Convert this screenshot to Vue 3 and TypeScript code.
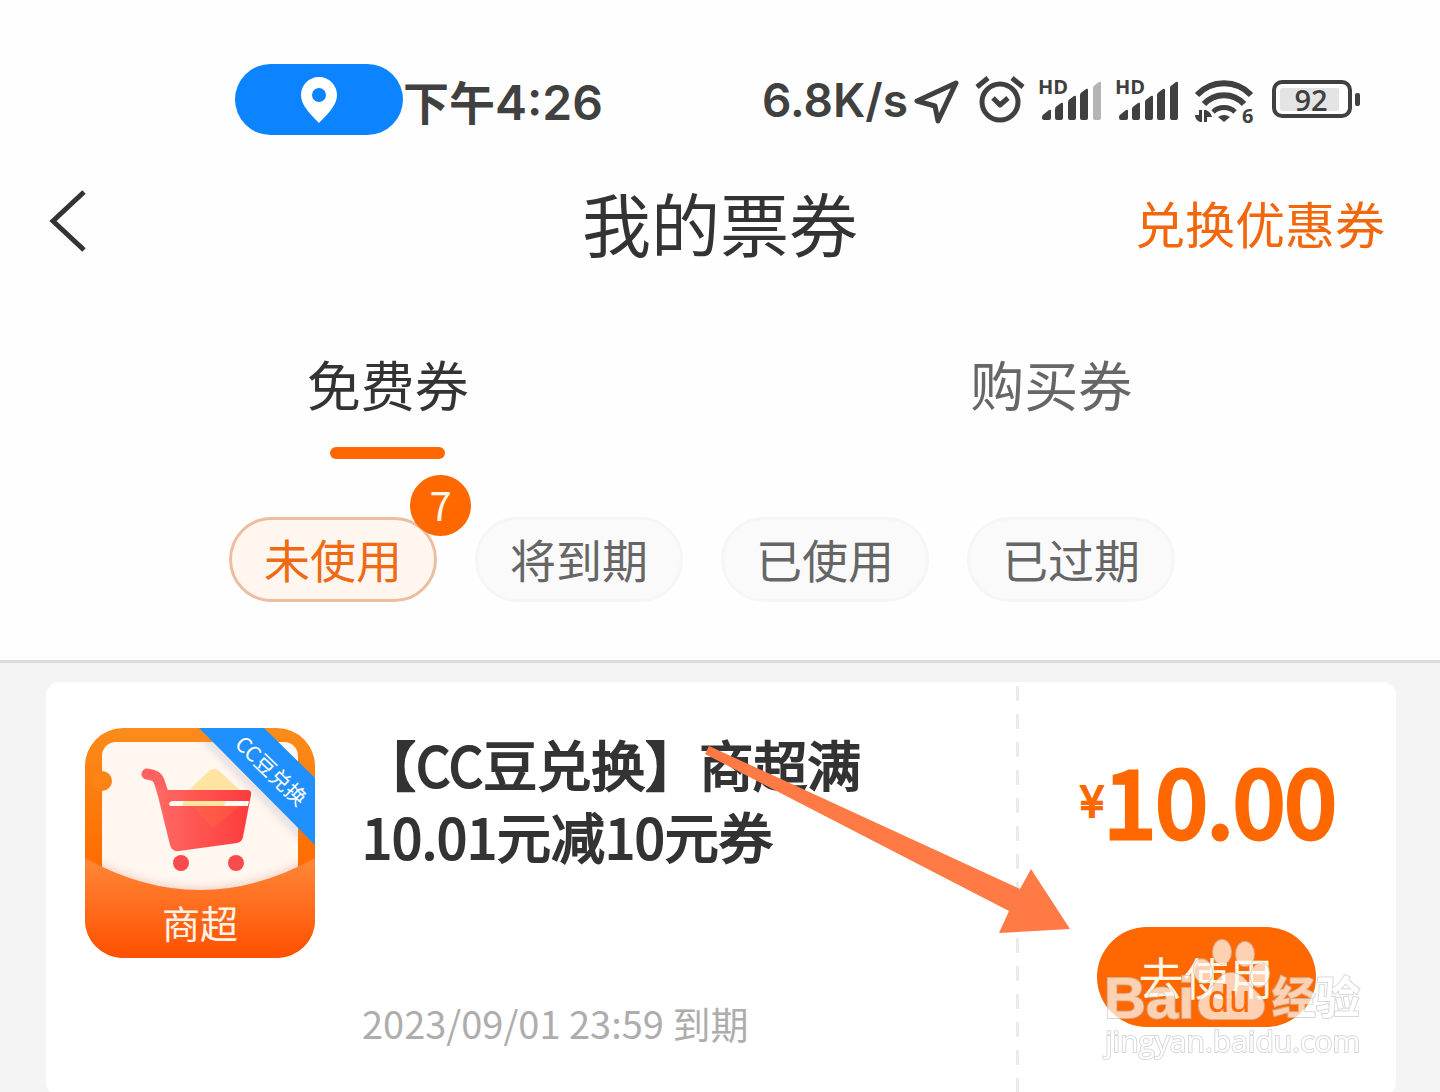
<script setup lang="ts">
import { ref } from 'vue'

interface Filter {
  id: string
  label: string
  count?: number
}

const tabs: string[] = ['免费券', '购买券']
const activeTab = ref(0)

const filters: Filter[] = [
  { id: 'unused', label: '未使用', count: 7 },
  { id: 'expiring', label: '将到期' },
  { id: 'used', label: '已使用' },
  { id: 'expired', label: '已过期' },
]
const activeFilter = ref('unused')

const signals: { id: number; weak: boolean }[] = [
  { id: 1, weak: true },
  { id: 2, weak: false },
]
</script>

<template>
  <div class="page">
    <div class="status">
      <div class="status-left">
        <span class="pill">
          <svg width="36" height="46" viewBox="0 0 36 46" aria-hidden="true">
            <path
              fill="#fff"
              fill-rule="evenodd"
              d="M18 0C8 0 0 8 0 18c0 9 7 17 18 28 11-11 18-19 18-28C36 8 28 0 18 0Zm0 11a7 7 0 1 1 0 14 7 7 0 0 1 0-14Z"
            />
          </svg>
        </span>
        <span class="time"><span class="period">下午</span>4:26</span>
      </div>
      <div class="status-right">
        <span class="speed">6.8K/s</span>
        <svg width="54" height="72" viewBox="4 0 54 72" aria-hidden="true">
          <path d="M46 19 7 37l18 5 3 15Z" fill="none" stroke="#404040" stroke-width="5" stroke-linejoin="round" />
        </svg>
        <svg width="64" height="72" viewBox="0 0 64 72" fill="none" stroke="#404040" stroke-width="5" aria-hidden="true">
          <circle cx="32" cy="38" r="18" />
          <path d="m25 34 7 7 8-7" stroke-linejoin="round" />
          <path d="M9 23l11-9M44 14l11 9" />
        </svg>
        <svg v-for="s in signals" :key="s.id" width="77" height="72" viewBox="0 0 77 72" fill="#404040" aria-hidden="true">
          <text x="6" y="30" class="hd">HD</text>
          <path d="M10 53q0-2 2-3l5-4q2-1 2 1v7q0 2-2 2h-5q-2 0-2-2Z" />
          <path d="M23 45q0-2 2-3l4-3q2-1 2 1v14q0 2-2 2h-4q-2 0-2-2Z" />
          <path d="M36 38q0-2 2-3l4-3q2-1 2 1v21q0 2-2 2h-4q-2 0-2-2Z" />
          <path d="M48 31q0-2 2-3l4-3q2-1 2 1v28q0 2-2 2h-4q-2 0-2-2Z" />
          <path :fill="s.weak ? '#b4b4b4' : '#404040'" d="M61 24q0-2 2-3l4-3q2-1 2 1v35q0 2-2 2h-4q-2 0-2-2Z" />
        </svg>
        <svg width="78" height="72" viewBox="0 0 78 72" fill="none" stroke="#404040" aria-hidden="true">
          <path d="M11 31a37 37 0 0 1 54 0M18 40a27 27 0 0 1 40 0" stroke-width="6" />
          <path d="M27 48a16 16 0 0 1 22 0" stroke-width="5" />
          <path d="M32 53q6-4 12 0l-6 5Z" fill="#404040" stroke="none" />
          <path d="M16 46v12h-2q-5-2-5-7h4v-5ZM18 58V46h2q5 2 6 7h-5v5Z" fill="#404040" stroke="none" />
          <text x="56" y="59" class="gen">6</text>
        </svg>
        <svg width="96" height="72" viewBox="0 0 96 72" aria-hidden="true">
          <rect x="10" y="18" width="76" height="34" rx="8" fill="none" stroke="#404040" stroke-width="4" />
          <rect x="16" y="24" width="59" height="23" rx="2" fill="#e4e4e4" />
          <rect x="91" y="29" width="5" height="13" rx="2" fill="#404040" />
          <text x="47" y="47" class="charge">92</text>
        </svg>
      </div>
    </div>

    <header class="header">
      <button class="back" type="button" aria-label="返回">
        <svg width="40" height="64" viewBox="0 0 40 64" aria-hidden="true">
          <path d="M36 2 5 31l31 29" fill="none" stroke="#333" stroke-width="5" />
        </svg>
      </button>
      <h1 class="heading">我的票券</h1>
      <a class="redeem" href="#redeem">兑换优惠券</a>
    </header>

    <nav class="tabs">
      <button
        v-for="(tab, i) in tabs"
        :key="tab"
        type="button"
        class="tab"
        :class="{ active: activeTab === i }"
        @click="activeTab = i"
      >
        {{ tab }}
      </button>
    </nav>

    <div class="filters">
      <button
        v-for="f in filters"
        :key="f.id"
        type="button"
        class="chip"
        :class="{ active: activeFilter === f.id }"
        @click="activeFilter = f.id"
      >
        {{ f.label }}
        <span v-if="f.count" class="badge">{{ f.count }}</span>
      </button>
    </div>

    <main class="list">
      <article class="card">
        <svg class="thumb" width="230" height="230" viewBox="0 0 230 230" aria-hidden="true">
          <defs>
            <linearGradient id="frame" x1="0" y1="0" x2="0" y2="1">
              <stop offset="0" stop-color="#fa8c1b" />
              <stop offset=".6" stop-color="#ff6c00" />
            </linearGradient>
            <linearGradient id="pocket" x1="0" y1="0" x2="0" y2="1">
              <stop offset="0" stop-color="#ff8838" />
              <stop offset="1" stop-color="#ff5000" />
            </linearGradient>
            <linearGradient id="cart" x1="0" y1="0" x2="1" y2="0">
              <stop offset="0" stop-color="#ff6a63" />
              <stop offset="1" stop-color="#fe3a3c" />
            </linearGradient>
            <filter id="soft" x="-20%" y="-20%" width="140%" height="140%">
              <feGaussianBlur stdDeviation="4" />
            </filter>
            <clipPath id="round"><rect width="230" height="230" rx="38" /></clipPath>
            <clipPath id="paper"><rect x="17" y="14" width="196" height="160" rx="14" /></clipPath>
          </defs>
          <g clip-path="url(#round)">
            <rect width="230" height="230" fill="url(#frame)" />
            <rect x="17" y="14" width="196" height="160" rx="14" fill="#fff7f0" />
            <circle cx="17" cy="53" r="10" fill="#fc8314" />
            <g clip-path="url(#paper)" opacity=".22">
              <g filter="url(#soft)">
                <path d="M0 128q115 64 230 0v60H0Z" fill="#c04a30" />
                <path d="m112 0 118 120" fill="none" stroke="#70708a" stroke-width="8" />
              </g>
            </g>
            <path d="M124 43q5-4 10 0l22 20-23 30q-4 5-8 0l-22-30Z" fill="#ffe3a0" />
            <path d="M62 46q10 1 12 7l6 18" fill="none" stroke="#ff625e" stroke-width="11" stroke-linecap="round" />
            <path
              d="m70 56 10 6h82q5 0 4 5l-8 42q-1 5-6 6l-58 8q-7 1-9-6Z"
              fill="url(#cart)"
            />
            <path d="M107 78h48l-24 20q-3 2-6 0Z" fill="#ff7a3a" opacity=".25" />
            <path d="M87 73h77l-1 5H87q-3 0-3-2t3-3Z" fill="#fff7f0" />
            <path d="M99 73h42l-2 5h-42Z" fill="#ffe3a0" />
            <circle cx="96" cy="135" r="8" fill="#f94a4c" />
            <circle cx="151" cy="135" r="8" fill="#f94a4c" />
            <path d="M0 130q115 64 230 0v100H0Z" fill="url(#pocket)" />
            <path d="M114 0h65l51 50v67Z" fill="#2090ff" />
            <text class="ribbon" x="187" y="42" transform="rotate(44 187 42)">CC豆兑换</text>
            <text class="category" x="115" y="210">商超</text>
          </g>
        </svg>
        <div class="info">
          <h2 class="title">【CC豆兑换】商超满10.01元减10元券</h2>
          <p class="expiry">2023/09/01 23:59 到期</p>
        </div>
        <div class="side">
          <p class="price"><span class="yen">¥</span>10.00</p>
          <button class="use" type="button">去使用</button>
        </div>

        <svg class="pointer" width="366" height="190" viewBox="0 0 366 190" aria-hidden="true">
          <path d="m4 1 311 143 11-20 39 60-71 4 10-22L0 9Z" fill="#ff7a45" />
        </svg>
        <svg class="watermark" width="270" height="136" viewBox="0 0 270 136" aria-hidden="true">
          <g class="mark">
            <text x="4" y="86" class="brand">Bai</text>
            <ellipse cx="122" cy="20" rx="9" ry="12" />
            <ellipse cx="145" cy="22" rx="9" ry="12" />
            <ellipse cx="103" cy="39" rx="9" ry="12" transform="rotate(-15 103 39)" />
            <ellipse cx="160" cy="43" rx="9" ry="12" transform="rotate(15 160 43)" />
            <path d="M131 41c-12 0-15 12-23 18-7 5-10 10-9 16 1 9 8 13 16 12h34c9 1 15-5 15-13 0-7-5-11-10-16-7-6-11-17-23-17Z" />
            <text x="172" y="82" class="brand-cn">经验</text>
            <text x="5" y="120" class="site">jingyan.baidu.com</text>
          </g>
          <text x="108" y="80" class="du">du</text>
        </svg>
      </article>
    </main>
  </div>
</template>

<style>
body {
  margin: 0;
  background: #fff;
}
</style>

<style scoped>
.page {
  height: 100vh;
  overflow: hidden;
  display: flex;
  flex-direction: column;
  background: #fefefe;
  color: #333;
  font-family: 'Noto Sans CJK SC', sans-serif;
}

button {
  padding: 0;
  border: 0;
  background: none;
  color: inherit;
  font: inherit;
  cursor: pointer;
}

h1,
h2,
p {
  margin: 0;
  font-weight: 400;
}

svg {
  display: block;
  flex: none;
}

.status {
  flex: none;
  display: flex;
  justify-content: space-between;
  padding: 64px 80px 0 235px;
  height: 72px;
  line-height: 72px;
  color: #404040;
  font-family: Inter, 'Noto Sans CJK SC', sans-serif;
  font-size: 48px;
  font-weight: 600;
}

.status-left,
.status-right {
  display: flex;
  align-items: flex-start;
  white-space: nowrap;
}

.pill {
  display: flex;
  align-items: center;
  justify-content: center;
  width: 168px;
  height: 71px;
  border-radius: 36px;
  background: #0d84ff;
}

.period {
  font-family: 'Noto Sans CJK SC', sans-serif;
  font-size: 46px;
  font-weight: 700;
}

.speed {
  padding-right: 6px;
  font-size: 46px;
}

.hd,
.gen,
.charge {
  font-family: 'Open Sans', sans-serif;
  font-weight: 700;
}

.hd {
  font-size: 20px;
}

.gen {
  font-size: 20px;
  fill: #404040;
  stroke: none;
}

.charge {
  font-size: 29px;
  font-weight: 600;
  text-anchor: middle;
  fill: #404040;
}

.header {
  flex: none;
  display: grid;
  grid-template-columns: 1fr auto 1fr;
  align-items: center;
  height: 100px;
  margin-top: 36px;
  padding: 0 48px;
}

.back {
  justify-self: start;
}

.heading {
  font-size: 69px;
  line-height: 100px;
}

.redeem {
  justify-self: end;
  padding-right: 7px;
  color: #f2660c;
  font-size: 50px;
  line-height: 98px;
  text-decoration: none;
}

.tabs {
  flex: none;
  display: flex;
  margin-top: 72px;
  padding: 0 57px 0 56px;
}

.tab {
  flex: 1;
  display: flex;
  flex-direction: column;
  align-items: center;
  height: 115px;
  color: #666;
  font-size: 54px;
  line-height: 80px;
}

.tab.active {
  color: #333;
}

.tab.active::after {
  content: '';
  width: 115px;
  height: 12px;
  margin-top: 23px;
  border-radius: 6px;
  background: #ff6700;
}

.filters {
  flex: none;
  display: flex;
  justify-content: center;
  gap: 38px;
  margin-top: 58px;
  padding: 0 36px 58px 0;
  border-bottom: 3px solid #dcdcdc;
}

.chip {
  position: relative;
  width: 208px;
  height: 85px;
  box-sizing: border-box;
  padding-bottom: 3px;
  border: 3px solid #f6f6f6;
  border-radius: 43px;
  background: #fafafa;
  color: #666;
  font-size: 46px;
  line-height: 76px;
}

.chip.active {
  border-color: #edbd9f;
  background: #fff6f0;
  color: #ee6a14;
}

.badge {
  position: absolute;
  top: -45px;
  right: -37px;
  width: 61px;
  height: 61px;
  border-radius: 50%;
  background: #ff6700;
  color: #fff6e8;
  font-size: 40px;
  line-height: 58px;
  text-align: center;
}

.list {
  flex: 1;
  padding: 19px 44px 0 46px;
  background: #f4f4f4;
}

.card {
  position: relative;
  display: flex;
  height: 414px;
  border-radius: 14px;
  background: #fff;
}

.thumb {
  margin: 46px 47px 0 39px;
}

.info {
  flex: 1;
  display: flex;
  flex-direction: column;
  justify-content: space-between;
  padding: 46px 100px 43px 0;
}

.title {
  font-size: 54px;
  line-height: 72px;
  -webkit-text-stroke: 2px #333;
  paint-order: stroke;
}

.expiry {
  color: #adadad;
  font-size: 38px;
  line-height: 60px;
}

.side {
  display: flex;
  flex-direction: column;
  align-items: center;
  width: 380px;
  background: repeating-linear-gradient(#ebebed 0 15px, transparent 15px 28px) 0 4px / 3px 100% no-repeat;
}

.price {
  display: flex;
  align-items: center;
  margin-top: 66px;
  padding-left: 4px;
  color: #ff6700;
  font-size: 93px;
  line-height: 100px;
  -webkit-text-stroke: 5px #ff6700;
}

.yen {
  font-size: 44px;
  -webkit-text-stroke: 2px #ff6700;
}

.use {
  width: 219px;
  height: 100px;
  margin-top: 79px;
  border-radius: 50px;
  background: #ff6700;
  color: #fff6e4;
  font-size: 45px;
  line-height: 100px;
}

.ribbon {
  fill: #fff;
  font-size: 21px;
  text-anchor: middle;
  dominant-baseline: central;
}

.category {
  fill: #fff3e8;
  font-size: 38px;
  text-anchor: middle;
}

.pointer {
  position: absolute;
  top: 63px;
  right: 325px;
}

.watermark {
  position: absolute;
  top: 250px;
  right: 26px;
}

.mark {
  opacity: 0.7;
  fill: #fff;
  stroke: #c8c8c8;
  stroke-width: 2px;
  paint-order: stroke;
}

.brand {
  font-family: 'Liberation Sans', sans-serif;
  font-size: 58px;
  font-weight: 700;
}

.brand-cn {
  font-size: 44px;
  font-weight: 700;
}

.site {
  font-family: 'Open Sans', sans-serif;
  font-size: 30px;
}

.du {
  fill: #ff6700;
  font-family: 'Liberation Sans', sans-serif;
  font-size: 38px;
}
</style>
